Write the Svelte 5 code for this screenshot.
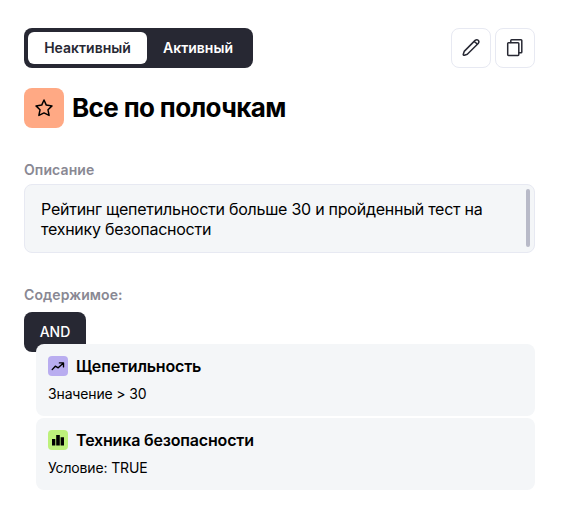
<script>
	let active = $state(false);

	const title = 'Все по полочкам';
	const description = 'Рейтинг щепетильности больше 30 и пройденный тест на технику безопасности';

	const rules = [
		{ name: 'Щепетильность', text: 'Значение > 30', icon: 'trend' },
		{ name: 'Техника безопасности', text: 'Условие: TRUE', icon: 'bars' }
	];
</script>

<main>
	<header>
		<div class="toggle">
			<button class="off" class:selected={!active} onclick={() => (active = false)}>Неактивный</button>
			<button class="on" class:selected={active} onclick={() => (active = true)}>Активный</button>
		</div>
		<div class="actions">
			<button class="action" aria-label="Редактировать">
				<svg width="24" height="24" viewBox="0 0 24 24">
					<path d="M4.6 19.2 Q4.1 19.1 4.2 18.4 L5.2 15.4 L16.1 4.4 Q17.8 3 19.2 4.3 Q20.6 5.8 19.2 7.5 L8.3 18.2 L5.4 19.2 Q4.9 19.4 4.6 19.2 M15.6 5.4 L18 7.9" />
				</svg>
			</button>
			<button class="action" aria-label="Копировать">
				<svg width="24" height="24" viewBox="0 0 24 24">
					<rect x="4.7" y="6.8" width="11.1" height="12.6" rx="0.8" />
					<path d="M7.8 6.6 V4.6 Q7.8 3.8 8.6 3.8 H18 Q18.8 3.8 18.8 4.6 V16 Q18.8 16.8 18 16.8 H16" />
				</svg>
			</button>
		</div>
	</header>

	<div class="heading">
		<div class="badge">
			<svg width="24" height="24" viewBox="0 0 24 24">
				<path d="M12 4 L14.3 9.1 L20 9.9 L16 13.8 L17.1 19.4 L12 16.9 L6.9 19.4 L8 13.8 L4 9.9 L9.7 9.1 Z" />
			</svg>
		</div>
		<h1>{title}</h1>
	</div>

	<h2>Описание</h2>
	<div class="description">
		<p>{description}</p>
		<div class="scrollbar"></div>
	</div>

	<h2>Содержимое:</h2>
	<div class="operator">AND</div>
	<div class="rules">
		{#each rules as rule}
			<div class="rule">
				<div class="rule-title">
					<div class="rule-icon {rule.icon}">
						<svg width="20" height="20" viewBox="0 0 20 20">
							{#if rule.icon === 'trend'}
								<path d="M4.2 13.6 L7.3 10.2 L10.2 11.8 L15.2 7.2 M11.4 6.9 H15.5 V10.9" />
							{:else}
								<path d="M4 9 H7.3 V15.4 H4 Z M8.2 5 H11.8 V15.4 H8.2 Z M12.6 7.2 H16 V15.4 H12.6 Z" />
							{/if}
						</svg>
					</div>
					<h3>{rule.name}</h3>
				</div>
				<p>{rule.text}</p>
			</div>
		{/each}
	</div>
</main>

<style>
	:global(body) {
		background: #fff;
	}

	main {
		box-sizing: border-box;
		width: 561px;
		height: 528px;
		padding: 28px 26px 0 24px;
		font-family: Inter, 'Liberation Sans', sans-serif;
		color: #000;
	}

	h1, h2, h3, p {
		margin: 0;
	}

	button {
		padding: 0;
		border: none;
		font-family: inherit;
		cursor: pointer;
	}

	svg {
		display: block;
		fill: none;
		stroke: #272833;
		stroke-width: 1.5;
		stroke-linejoin: round;
		stroke-linecap: round;
	}

	header {
		display: flex;
		justify-content: space-between;
		height: 40px;
	}

	.toggle {
		display: flex;
		box-sizing: border-box;
		padding: 4px;
		border-radius: 8px;
		background: #272833;
	}

	.toggle button {
		padding-bottom: 1px;
		border-radius: 6px;
		background: transparent;
		color: #fff;
		font-size: 14px;
		font-weight: 600;
	}

	.toggle .off {
		width: 119px;
	}

	.toggle .on {
		width: 102px;
	}

	.toggle .selected {
		background: #fff;
		color: #272833;
	}

	.actions {
		display: flex;
		gap: 4px;
	}

	.action {
		display: flex;
		align-items: center;
		justify-content: center;
		box-sizing: border-box;
		width: 40px;
		height: 40px;
		border: 1px solid #e7e9f2;
		border-radius: 8px;
		background: #fff;
	}

	.heading {
		display: flex;
		align-items: center;
		gap: 8px;
		margin-top: 20px;
	}

	.badge {
		display: flex;
		align-items: center;
		justify-content: center;
		width: 40px;
		height: 40px;
		border-radius: 8px;
		background: #ffa984;
	}

	.badge svg {
		stroke: #000;
	}

	h1 {
		font-size: 26px;
		font-weight: 700;
		line-height: 40px;
		letter-spacing: -0.62px;
	}

	h2 {
		margin-top: 32px;
		color: #898893;
		font-size: 14px;
		font-weight: 600;
		line-height: 20px;
		letter-spacing: 0.1px;
	}

	.description {
		display: flex;
		justify-content: space-between;
		box-sizing: border-box;
		height: 69px;
		margin-top: 4px;
		padding: 4px 4px 4px 16px;
		border: 1px solid #e7e9f2;
		border-radius: 8px;
		background: #f4f6f8;
	}

	.description p {
		width: 455px;
		padding-top: 10px;
		font-size: 16px;
		line-height: 20px;
		letter-spacing: -0.25px;
	}

	.scrollbar {
		width: 4px;
		height: 58px;
		border-radius: 2px;
		background: #b8bac8;
	}

	.operator {
		box-sizing: border-box;
		width: 62px;
		height: 40px;
		margin-top: 7px;
		border-radius: 8px;
		background: #272833;
		color: #fff;
		font-size: 14px;
		font-weight: 500;
		line-height: 40px;
		text-align: center;
	}

	.rules {
		display: flex;
		flex-direction: column;
		gap: 2px;
		margin: -8px 0 0 12px;
		position: relative;
	}

	.rule {
		box-sizing: border-box;
		height: 72px;
		padding: 12px;
		border-radius: 8px;
		background: #f4f6f8;
	}

	.rule-title {
		display: flex;
		align-items: center;
		gap: 8px;
	}

	.rule-icon {
		width: 20px;
		height: 20px;
		border-radius: 4px;
	}

	.rule-icon svg {
		stroke: #000;
		stroke-width: 1.4;
	}

	.trend {
		background: #b9adf0;
	}

	.bars {
		background: #bdf17b;
	}

	.bars svg {
		fill: #000;
		stroke: none;
	}

	h3 {
		font-size: 16px;
		font-weight: 600;
		line-height: 20px;
		letter-spacing: -0.18px;
	}

	.rule p {
		margin-top: 8px;
		font-size: 14px;
		line-height: 20px;
		letter-spacing: -0.15px;
	}
</style>
